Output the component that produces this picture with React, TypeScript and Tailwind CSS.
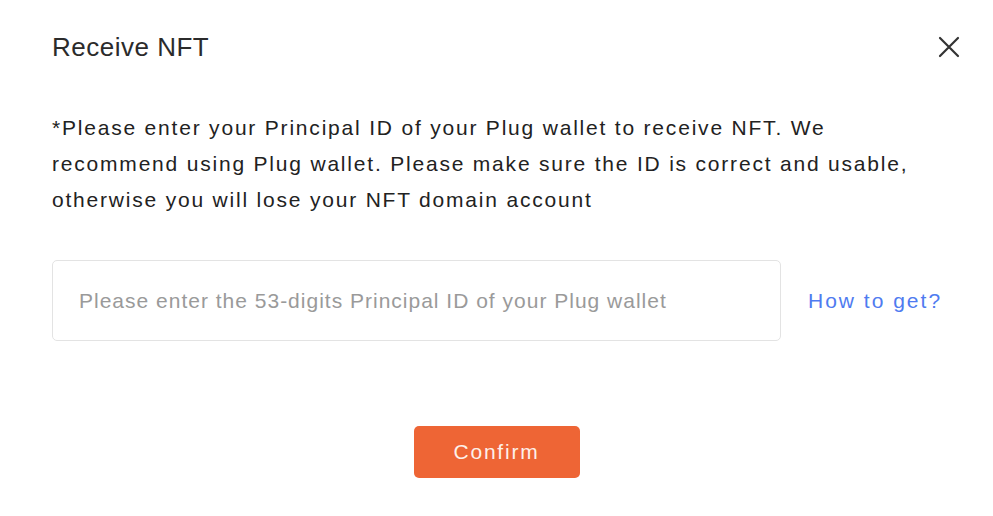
import React from "react";

export default function App() {
  return (
    <div
      className="w-[993px] h-[516px] bg-white overflow-hidden relative"
      style={{ fontFamily: '"Liberation Sans", Arial, sans-serif' }}
    >
      <div className="flex items-center justify-between pl-[52px] pr-[32px] pt-[32px] h-[62px]">
        <h2 className="text-[26px] leading-[30px] text-[#2b2b2b] tracking-[0.5px]">Receive NFT</h2>
        <button className="w-[24px] h-[24px] flex items-center justify-center text-[#333]">
          <svg width="22" height="22" viewBox="0 0 22 22" fill="none" stroke="currentColor" strokeWidth="2.2" strokeLinecap="round">
            <path d="M2 2 L20 20 M20 2 L2 20" />
          </svg>
        </button>
      </div>
      <p className="mt-[48px] pl-[52px] pr-[60px] text-[21px] leading-[36px] text-[#222] tracking-[1.8px]">
        *Please enter your Principal ID of your Plug wallet to receive NFT. We recommend using Plug wallet. Please make sure the ID is correct and usable, otherwise you will lose your NFT domain account
      </p>
      <div className="mt-[42px] pl-[52px] flex items-center">
        <input
          className="w-[729px] h-[81px] border border-[#e3e3e3] rounded-[5px] px-[26px] text-[21px] tracking-[1px] text-[#333] placeholder:text-[#9a9a9a] outline-none"
          placeholder="Please enter the 53-digits Principal ID of your Plug wallet"
        />
        <a className="ml-[27px] text-[21px] tracking-[2px] text-[#4f7bf0]">How to get?</a>
      </div>
      <div className="flex justify-center mt-[85px]">
        <button className="w-[166px] h-[52px] rounded-[5px] bg-[#ee6535] text-[21px] tracking-[1.8px] text-[#fdf0ea]">Confirm</button>
      </div>
    </div>
  );
}
